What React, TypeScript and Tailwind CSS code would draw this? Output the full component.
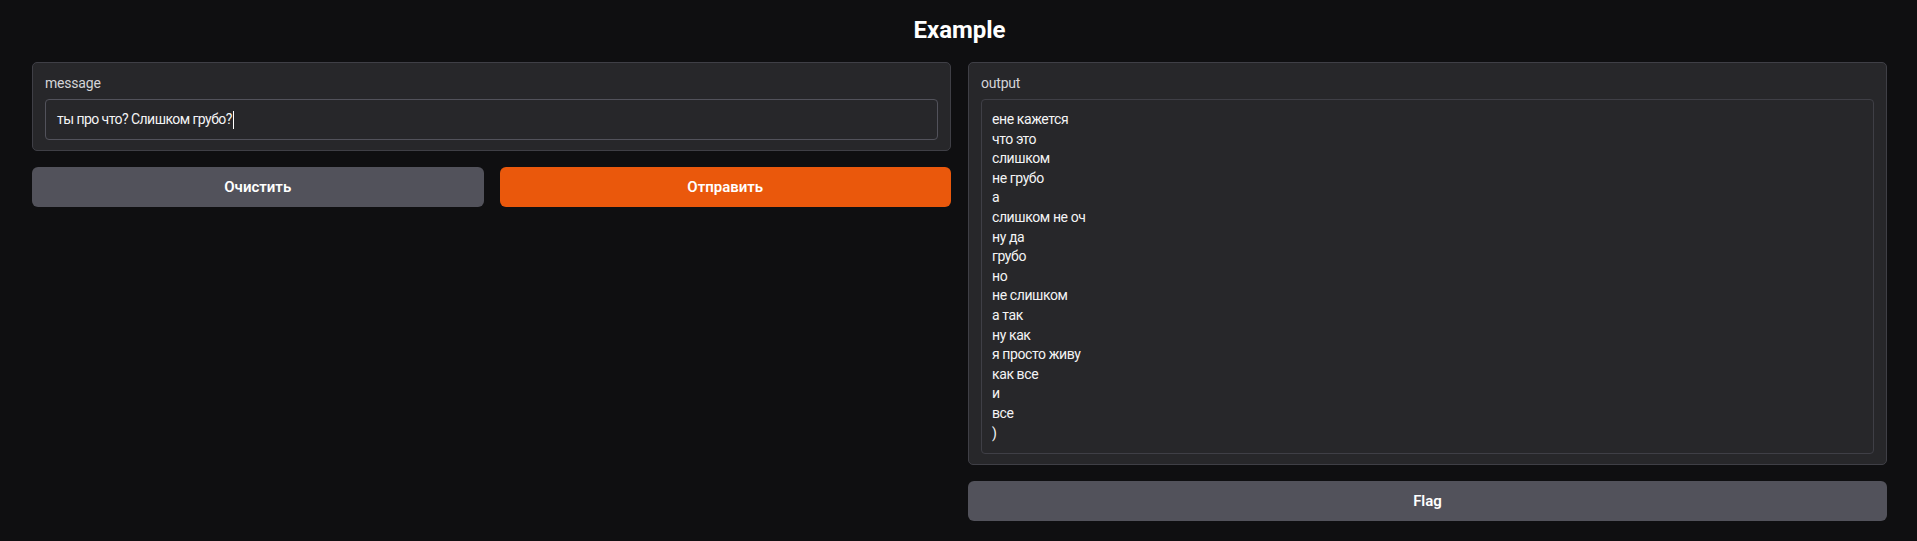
const outputLines = [
	"ене кажется",
	"что это",
	"слишком",
	"не грубо",
	"а",
	"слишком не оч",
	"ну да",
	"грубо",
	"но",
	"не слишком",
	"а так",
	"ну как",
	"я просто живу",
	"как все",
	"и",
	"все",
	")",
];

const font = { fontFamily: "Roboto, 'Noto Sans', sans-serif" };

function Block({ label, children }: { label: string; children: React.ReactNode }) {
	return (
		<div className="rounded-[5px] border border-[#3f3f46] bg-[#27272a] px-[12px] pt-[10px] pb-[10px]">
			<div className="mb-[6px] text-[14px] leading-[20px] tracking-[-0.2px] text-[#d4d4d8]">{label}</div>
			{children}
		</div>
	);
}

export default function App() {
	return (
		<div className="min-h-[541px] bg-[#0f0f11] text-[#f4f4f5]" style={font}>
			<div className="pl-[32px] pr-[30px]">
				<h1 className="pt-[14px] pb-[16px] text-center text-[24px] font-bold leading-[32px] text-white">
					Example
				</h1>
				<div className="grid grid-cols-2 gap-[17px]">
					<div className="flex flex-col gap-[16px]">
						<Block label="message">
							<div className="mt-px flex h-[41px] items-center rounded-[4px] border border-[#52525b] bg-[#27272a] px-[11px] text-[14px] tracking-[-0.55px] text-[#f4f4f5]">
								<span>ты про что? Слишком грубо?</span>
								<span className="ml-px h-[18px] w-px bg-white" />
							</div>
						</Block>
						<div className="grid grid-cols-2 gap-[16px]">
							<button className="h-[40px] rounded-[6px] bg-[#52525b] text-[15px] font-semibold text-white">
								Очистить
							</button>
							<button className="h-[40px] rounded-[6px] bg-[#ea580c] text-[15px] font-semibold text-white">
								Отправить
							</button>
						</div>
					</div>
					<div className="flex flex-col gap-[16px]">
						<Block label="output">
							<div className="rounded-[4px] border border-[#3f3f46] bg-[#27272a] px-[10px] py-[10px] text-[14px] leading-[19.6px] tracking-[-0.4px] text-[#f4f4f5]">
								{outputLines.map((line, i) => (
									<div key={i}>{line}</div>
								))}
							</div>
						</Block>
						<button className="h-[40px] rounded-[6px] bg-[#52525b] text-[15px] font-semibold text-white">
							Flag
						</button>
					</div>
				</div>
			</div>
		</div>
	);
}
